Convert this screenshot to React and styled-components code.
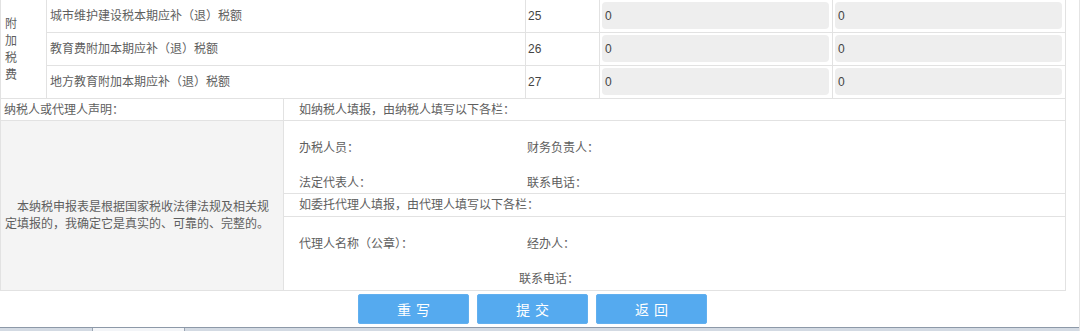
import React from "react";
import styled, { createGlobalStyle } from "styled-components";

const Global = createGlobalStyle`
  html, body { margin: 0; padding: 0; background: #fff; }
  body {
    font-family: "Liberation Sans", "Noto Sans CJK SC", sans-serif;
    font-size: 12px;
    color: #5e5e5e;
  }
`;

const Page = styled.div`
  width: 1080px;
  height: 331px;
  box-sizing: border-box;
  border-right: 1px solid #e4e4e4;
  display: flex;
  flex-direction: column;
  overflow: hidden;
`;

const TaxGrid = styled.div`
  width: 1065px;
  box-sizing: border-box;
  display: grid;
  grid-template-columns: 46px 479px 74px 233px 233px;
  grid-auto-rows: 33px;
  border-left: 1px solid #e2e2e2;
`;

const Cell = styled.div`
  box-sizing: border-box;
  border-right: 1px solid #e2e2e2;
  border-bottom: 1px solid #e2e2e2;
  display: flex;
  align-items: center;
  padding: ${(p) => p.$pad || "0 3px"};
  line-height: 16px;
  white-space: nowrap;
`;

const SideCell = styled(Cell)`
  grid-row: span 3;
  padding: 2px 0 0 4px;
  line-height: 17px;
  white-space: normal;
  width: 100%;
`;

const Vertical = styled.span`
  display: block;
  width: 12px;
  word-break: break-all;
`;

const NumCell = styled(Cell)`
  padding: 0 2px;
  color: #444;
`;

const InputCell = styled(Cell)`
  padding: 2px 3px 3px 2px;
  align-items: stretch;
`;

const Field = styled.div`
  flex: 1;
  background: #eeeeee;
  border-radius: 4px;
  padding: 0 3px;
  display: flex;
  align-items: center;
  color: #444;
  font-size: 12px;
`;

const Declare = styled.div`
  width: 1065px;
  box-sizing: border-box;
  display: grid;
  grid-template-columns: 283px 782px;
  grid-template-rows: 22px auto;
  border-left: 1px solid #e2e2e2;
`;

const HeadCell = styled.div`
  box-sizing: border-box;
  border-right: 1px solid #e2e2e2;
  border-bottom: 1px solid #e2e2e2;
  display: flex;
  align-items: center;
  padding-left: ${(p) => p.$indent || "3px"};
  line-height: 16px;
`;

const Statement = styled.div`
  box-sizing: border-box;
  background: #f4f4f4;
  border-right: 1px solid #e2e2e2;
  border-bottom: 1px solid #e2e2e2;
  display: flex;
  align-items: center;
  padding: 20px 9px 0 4px;
`;

const StatementText = styled.p`
  margin: 0;
  line-height: 17px;
  text-indent: 12px;
`;

const SignArea = styled.div`
  box-sizing: border-box;
  border-right: 1px solid #e2e2e2;
  border-bottom: 1px solid #e2e2e2;
  display: flex;
  flex-direction: column;
`;

const SignBlock = styled.div`
  box-sizing: border-box;
  height: 73px;
  padding: 19px 0 0 15px;
  display: grid;
  grid-template-columns: 228px 1fr;
  grid-auto-rows: 16px;
  row-gap: 19px;
  line-height: 16px;
  border-bottom: ${(p) => (p.$last ? "none" : "1px solid #e2e2e2")};
`;

const SubHead = styled.div`
  box-sizing: border-box;
  height: 23px;
  border-bottom: 1px solid #e2e2e2;
  display: flex;
  align-items: center;
  padding-left: 15px;
  line-height: 16px;
`;

const Label = styled.span`
  grid-column: ${(p) => p.$col || "auto"};
  margin-left: ${(p) => p.$shift || "0"};
  white-space: nowrap;
`;

const ButtonRow = styled.div`
  width: 1065px;
  display: flex;
  justify-content: center;
  gap: 8px;
  padding-top: 3px;
`;

const Button = styled.button`
  width: 111px;
  height: 30px;
  border: 1px solid #62b0ef;
  border-radius: 2px;
  background: #55aaef;
  color: #fff;
  font-family: "Liberation Sans", "Noto Sans CJK SC", sans-serif;
  font-size: 14px;
  letter-spacing: 5px;
  padding: 0 0 0 5px;
  cursor: pointer;
`;

const Taskbar = styled.div`
  margin-top: auto;
  height: 3px;
  border-top: 1px solid #8d99a8;
  background: #d3dae3;
  display: flex;
  padding-left: 92px;
`;

const TaskTab = styled.div`
  width: 91px;
  background: #f3f5f8;
  border-left: 1px solid #9aa5b3;
  border-right: 1px solid #9aa5b3;
`;

const rows = [
  { label: "城市维护建设税本期应补（退）税额", no: 25 },
  { label: "教育费附加本期应补（退）税额", no: 26 },
  { label: "地方教育附加本期应补（退）税额", no: 27 },
];

export default function App() {
  return (
    <>
      <Global />
      <Page>
        <TaxGrid>
          <SideCell>
            <Vertical>附加税费</Vertical>
          </SideCell>
          {rows.map((r) => (
            <React.Fragment key={r.no}>
              <Cell>{r.label}</Cell>
              <NumCell>{r.no}</NumCell>
              <InputCell>
                <Field>0</Field>
              </InputCell>
              <InputCell>
                <Field>0</Field>
              </InputCell>
            </React.Fragment>
          ))}
        </TaxGrid>
        <Declare>
          <HeadCell>纳税人或代理人声明：</HeadCell>
          <HeadCell $indent="15px">如纳税人填报，由纳税人填写以下各栏：</HeadCell>
          <Statement>
            <StatementText>
              本纳税申报表是根据国家税收法律法规及相关规定填报的，我确定它是真实的、可靠的、完整的。
            </StatementText>
          </Statement>
          <SignArea>
            <SignBlock>
              <Label>办税人员：</Label>
              <Label>财务负责人：</Label>
              <Label>法定代表人：</Label>
              <Label>联系电话：</Label>
            </SignBlock>
            <SubHead>如委托代理人填报，由代理人填写以下各栏：</SubHead>
            <SignBlock $last>
              <Label>代理人名称（公章）：</Label>
              <Label>经办人：</Label>
              <Label $col="2" $shift="-8px">联系电话：</Label>
            </SignBlock>
          </SignArea>
        </Declare>
        <ButtonRow>
          <Button>重写</Button>
          <Button>提交</Button>
          <Button>返回</Button>
        </ButtonRow>
        <Taskbar>
          <TaskTab />
        </Taskbar>
      </Page>
    </>
  );
}
